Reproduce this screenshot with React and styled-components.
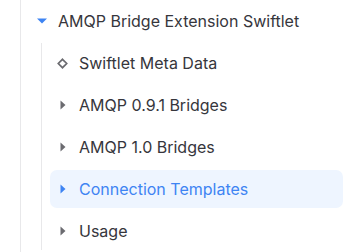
import React from "react";
import styled, { createGlobalStyle } from "styled-components";

const Global = createGlobalStyle`
  html, body { margin: 0; padding: 0; background: #ffffff; }
  body { font-family: Inter, "Noto Sans", sans-serif; -webkit-font-smoothing: antialiased; }
`;

const Tree = styled.div`
  margin-left: 20px;
  border-left: 1px solid #e8e8ea;
  height: 252px;
  box-sizing: border-box;
`;

const Heading = styled.div`
  display: flex;
  align-items: center;
  height: 41px;
  padding-left: 16px;
  gap: 11px;
  font-size: 16px;
  color: #36363c;
  white-space: nowrap;
`;

const Children = styled.div`
  margin-top: 2px;
  margin-left: 20px;
  border-left: 1px solid #e8e8ea;
  padding: 1px 0 0 8px;
  display: flex;
  flex-direction: column;
  gap: 4px;
  height: 207px;
  box-sizing: border-box;
`;

const Row = styled.div`
  display: flex;
  align-items: center;
  height: 38px;
  padding-left: 7px;
  border-radius: 7px;
  font-size: 16px;
  white-space: nowrap;
  color: ${(p) => (p.$active ? "#3e84f3" : "#36363c")};
  background: ${(p) => (p.$active ? "#eef5ff" : "transparent")};
`;

const IconBox = styled.span`
  width: 11px;
  height: 11px;
  display: inline-flex;
  align-items: center;
  justify-content: center;
  margin-right: 11px;
  flex: none;
`;

const CaretDown = () => (
  <svg width="10" height="6" viewBox="0 0 10 6">
    <path d="M0 0.5 L10 0.5 L5 5.5 Z" fill="#3e84f3" />
  </svg>
);

const CaretRight = ({ color }) => (
  <svg width="6" height="10" viewBox="0 0 6 10">
    <path d="M0.5 0.5 L5.5 5 L0.5 9.5 Z" fill={color} />
  </svg>
);

const Diamond = () => (
  <svg width="11" height="11" viewBox="0 0 11 11">
    <path d="M5.5 1.3 L9.7 5.5 L5.5 9.7 L1.3 5.5 Z" fill="none" stroke="#6b6b70" strokeWidth="1.7" />
  </svg>
);

const items = [
  { label: "AMQP 0.9.1 Bridges" },
  { label: "AMQP 1.0 Bridges" },
  { label: "Connection Templates", active: true },
  { label: "Usage" },
];

export default function App() {
  return (
    <>
      <Global />
      <Tree>
        <Heading>
          <CaretDown />
          <span>AMQP Bridge Extension Swiftlet</span>
        </Heading>
        <Children>
          <Row>
            <IconBox><Diamond /></IconBox>
            Swiftlet Meta Data
          </Row>
          {items.map((it) => (
            <Row key={it.label} $active={it.active}>
              <IconBox>
                <CaretRight color={it.active ? "#3e84f3" : "#6b6b70"} />
              </IconBox>
              {it.label}
            </Row>
          ))}
        </Children>
      </Tree>
    </>
  );
}
